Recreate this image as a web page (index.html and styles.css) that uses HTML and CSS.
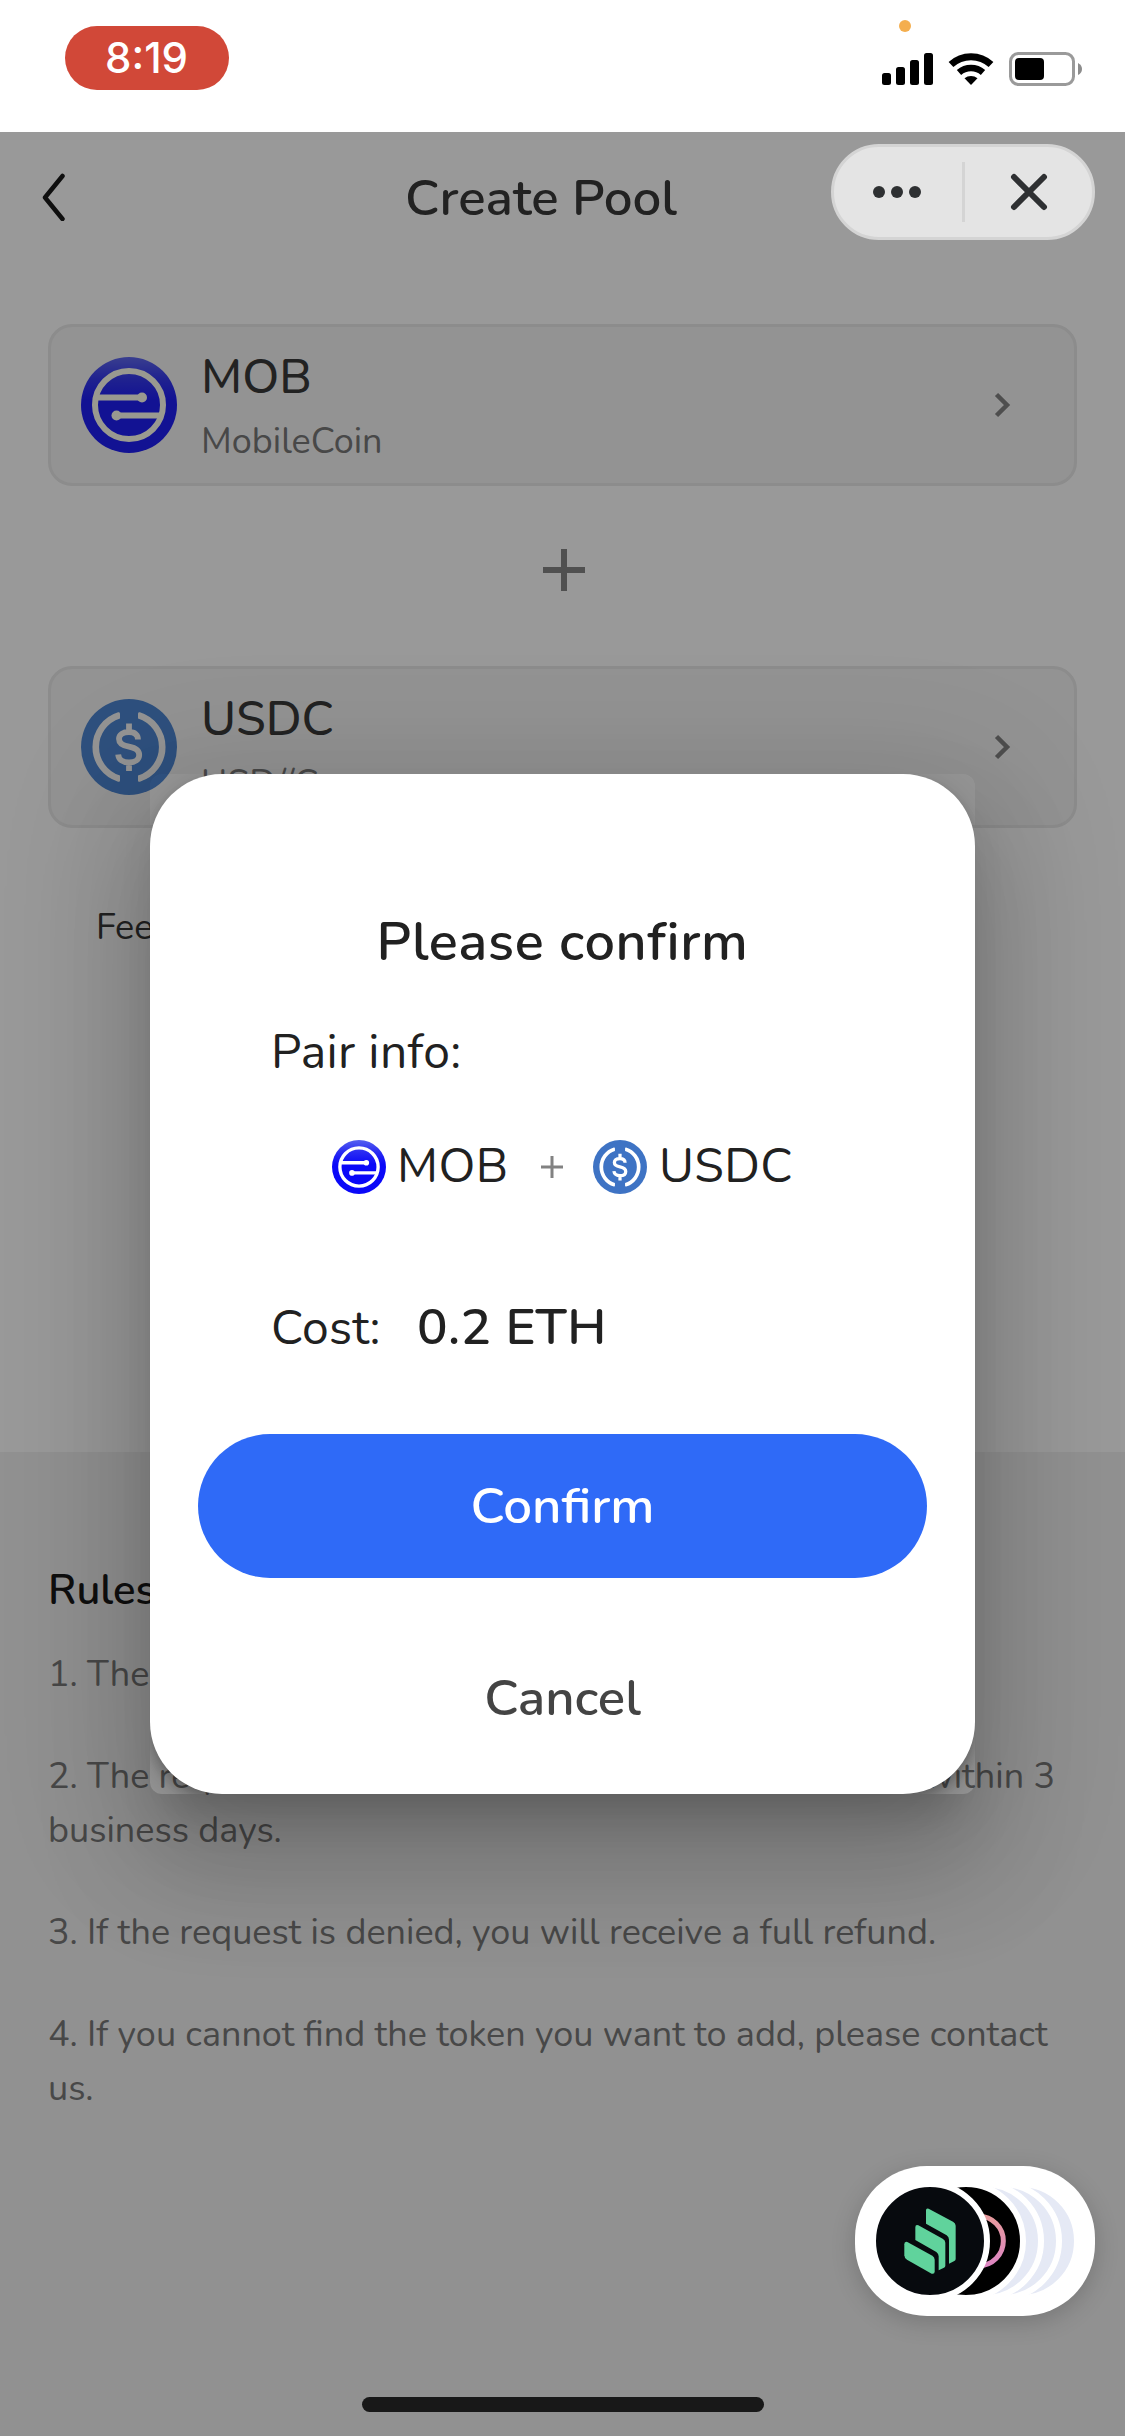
FILE: index.html
```html
<!DOCTYPE html>
<html lang="en">
<head>
<meta charset="utf-8">
<title>Create Pool</title>
<link rel="stylesheet" href="styles.css">
</head>
<body>
<svg class="defs" width="0" height="0" aria-hidden="true">
  <defs>
    <linearGradient id="mobFill" x1="0" y1="0" x2="0" y2="1">
      <stop offset="0" stop-color="#5560f0"/>
      <stop offset="0.22" stop-color="#2a2cf2"/>
      <stop offset="0.45" stop-color="#0a08f8"/>
      <stop offset="1" stop-color="#0a08f8"/>
    </linearGradient>
    <linearGradient id="mobFillCard" x1="0" y1="0" x2="0" y2="1">
      <stop offset="0" stop-color="#6068ee"/>
      <stop offset="0.22" stop-color="#363aee"/>
      <stop offset="0.45" stop-color="#1e1ef6"/>
      <stop offset="1" stop-color="#1e1ef6"/>
    </linearGradient>
    <linearGradient id="ringFill" x1="0" y1="0" x2="0" y2="1">
      <stop offset="0" stop-color="#e79a9d"/>
      <stop offset="1" stop-color="#dd86c2"/>
    </linearGradient>
    <symbol id="mob" viewBox="0 0 96 96">
      <circle cx="48" cy="48" r="34" fill="none" stroke="currentColor" stroke-width="6"/>
      <path d="M15 40.500H61M81 58.500H35" fill="none" stroke="currentColor" stroke-width="6"/>
      <circle cx="61" cy="40.500" r="5"/>
      <circle cx="35.500" cy="58.500" r="5"/>
    </symbol>
    <symbol id="usdc" viewBox="0 0 96 96">
      <path d="M39 15v4.400a30 30 0 0 0 0 57.200V81.500c0 1-.8 1.500-1.900 1.200a36.300 36.300 0 0 1 0-69.400c1.100-.3 1.900.3 1.900 1.700zM57 15v4.400a30 30 0 0 1 0 57.200V81.500c0 1 .8 1.500 1.900 1.200a36.300 36.300 0 0 0 0-69.400c-1.100-.3-1.900.3-1.900 1.700z"/>
      <path d="M57 40.500c0-4.500-3-7.500-9-7.500s-10 2.500-10 7c0 5 4 6.600 10 7.700 7 1.300 10.200 3.600 10.200 8.300S54 63.500 48 63.500 37.500 60.500 37.200 55.500M48 33v-8.500M48 72v-8.500" fill="none" stroke="currentColor" stroke-width="5.800"/>
    </symbol>
  </defs>
</svg>

<div class="screen">
  <div class="status">
    <div class="clock">8:19</div>
    <svg class="status-icons" width="210" height="80" viewBox="876 14 210 80">
      <circle cx="905" cy="26" r="6" fill="#f4ae4e"/>
      <rect x="882" y="73" width="9" height="12" rx="2.500"/>
      <rect x="896" y="67" width="9" height="18" rx="2.500"/>
      <rect x="910" y="60" width="9" height="25" rx="2.500"/>
      <rect x="924" y="53" width="9" height="32" rx="2.500"/>
      <path d="M951 64.500a29.500 29.500 0 0 1 40 0" fill="none" stroke="#000" stroke-width="7"/>
      <path d="M959 72.500a18 18 0 0 1 24 0" fill="none" stroke="#000" stroke-width="6.500"/>
      <path d="M971 85l-6.500-6.700a10.500 10.500 0 0 1 13 0z"/>
      <rect x="1010.500" y="53.500" width="63" height="31" rx="8" fill="none" stroke="#9a9a9a" stroke-width="3"/>
      <rect x="1015" y="58" width="29" height="22" rx="4"/>
      <path d="M1078 63q4 2 4 6t-4 6z" fill="#8c8c8c"/>
    </svg>
  </div>

  <div class="app">
    <header class="header">
      <svg class="back" width="24" height="48" viewBox="0 0 24 48"><path d="M20.500 3 3 24.500 20.500 46" fill="none" stroke="#1a1a1a" stroke-width="4.500" stroke-linecap="round" stroke-linejoin="round"/></svg>
      <h1 class="title">Create Pool</h1>
    </header>

    <main class="main">
      <div class="token">
        <svg class="token-icon cream" viewBox="0 0 96 96"><circle cx="48" cy="48" r="48" fill="url(#mobFillCard)"/><use href="#mob"/></svg>
        <div class="token-text">
          <div class="token-name">MOB</div>
          <div class="token-sub">MobileCoin</div>
        </div>
        <svg class="arrow" width="18" height="26" viewBox="0 0 18 26"><path d="M2.500 2.500 13 13 2.500 23.500" fill="none" stroke="#838383" stroke-width="4.500"/></svg>
      </div>
      <div class="plus-row">
        <svg width="42" height="42" viewBox="0 0 42 42"><path d="M21 0v42M0 21h42" stroke="#868686" stroke-width="6"/></svg>
      </div>
      <div class="token">
        <svg class="token-icon grey" viewBox="0 0 96 96"><circle cx="48" cy="48" r="48" fill="#4d86d2"/><use href="#usdc"/></svg>
        <div class="token-text">
          <div class="token-name">USDC</div>
          <div class="token-sub">USD//C</div>
        </div>
        <svg class="arrow" width="18" height="26" viewBox="0 0 18 26"><path d="M2.500 2.500 13 13 2.500 23.500" fill="none" stroke="#838383" stroke-width="4.500"/></svg>
      </div>
      <div class="fee">Fee</div>
    </main>

    <section class="rules">
      <h2 class="rules-title">Rules</h2>
      <p class="rule">1. The</p>
      <p class="rule"><span class="spread"><span>2. The request</span><span>within 3</span></span>business days.</p>
      <p class="rule">3. If the request is denied, you will receive a full refund.</p>
      <p class="rule">4. If you cannot find the token you want to add, please contact<br>us.</p>
    </section>
  </div>

  <div class="overlay">
    <div class="dialog">
      <div class="sheet">
        <h2 class="ask">Please confirm</h2>
        <div class="label pair-label">Pair info:</div>
        <div class="pair">
          <svg class="pair-icon" viewBox="0 0 96 96"><circle cx="48" cy="48" r="48" fill="url(#mobFill)"/><use href="#mob"/></svg>
          <span class="pair-name">MOB</span>
          <svg class="pair-plus" width="22" height="22" viewBox="0 0 22 22"><path d="M11 0v22M0 11h22" stroke="#828282" stroke-width="3"/></svg>
          <svg class="pair-icon" viewBox="0 0 96 96"><circle cx="48" cy="48" r="48" fill="#3e73c4"/><use href="#usdc"/></svg>
          <span class="pair-name pair-second">USDC</span>
        </div>
        <div class="cost"><span class="label cost-label">Cost:</span><span class="amount">0.2 ETH</span></div>
        <button class="btn confirm">Confirm</button>
        <button class="btn cancel">Cancel</button>
      </div>
    </div>
  </div>

  <div class="capsule">
    <svg width="258" height="90" viewBox="834 147 258 90">
      <g fill="#2e3032"><circle cx="879" cy="192" r="6"/><circle cx="897" cy="192" r="6"/><circle cx="915" cy="192" r="6"/></g>
      <path d="M963.500 162v60" stroke="#d4d4d4" stroke-width="3"/>
      <path d="M1014 177l30 30M1044 177l-30 30" stroke="#2e3032" stroke-width="6" stroke-linecap="round"/>
    </svg>
  </div>

  <div class="stack">
    <svg width="240" height="150" viewBox="165 138 720 450">
      <g stroke="#fff" stroke-width="18">
        <circle cx="660" cy="363" r="171" fill="#e5e9f5"/>
        <circle cx="606" cy="363" r="171" fill="#e5e9f5"/>
        <circle cx="552" cy="363" r="171" fill="#e5e9f5"/>
        <circle cx="498" cy="363" r="171" fill="#000"/>
      </g>
      <circle cx="536" cy="363" r="74" fill="none" stroke="url(#ringFill)" stroke-width="15"/>
      <circle cx="390" cy="363" r="171" fill="#070a0e" stroke="#fff" stroke-width="18"/>
      <g fill="#60d39c">
        <path d="M378 271q0-8 8-5l73 39q8 4 8 12v100q0 4-4 6l-16 8v-72q0-8-7-13l-62-35z"/>
        <path d="M346 322q0-9 9-6l73 40q8 4 8 12v69q0 4-4 6l-16 8v-42q0-8-7-13l-63-36z"/>
        <path d="M313 373q0-10 9-7l75 41q7 4 7 12v36q0 8-9 6l-74-42q-8-5-8-13z"/>
      </g>
    </svg>
  </div>
  <div class="home-bar"></div>
</div>
</body>
</html>
```
FILE: styles.css
```css
* { box-sizing: border-box; margin: 0; padding: 0; }

body {
  width: 1125px;
  height: 2436px;
  overflow: hidden;
  background: #fff;
  font-family: "Nunito", "Lato", "Noto Sans", sans-serif;
  color: #393939;
}

h1, h2 { font-weight: 600; }
svg { display: block; flex: none; }
.defs { position: absolute; }

.screen { position: relative; width: 1125px; height: 2436px; overflow: hidden; }

/* status bar */
.status {
  display: flex;
  justify-content: space-between;
  align-items: flex-start;
  height: 132px;
  padding: 14px 39px 0 65px;
}
.clock {
  width: 164px;
  height: 64px;
  margin-top: 12px;
  padding-right: 1px;
  border-radius: 32px;
  background: #d14838;
  color: #fff;
  font: 500 42px/64px "Inter", sans-serif;
  text-align: center;
}

/* page behind the dialog */
.app { height: 2304px; background: #fff; }
.header { display: flex; align-items: center; height: 126px; padding-left: 42px; }
.back { margin-top: 4px; }
.title { width: 280px; margin: 6px 0 0 339px; font-size: 51px; line-height: 60px; white-space: nowrap; }

.main { height: 1194px; padding: 66px 48px 0; }
.token {
  display: flex;
  align-items: center;
  height: 162px;
  padding: 0 62px 0 30px;
  border: 3px solid #e9e9e9;
  border-radius: 24px;
  background: #f5f5f5;
}
.token-icon { width: 96px; height: 96px; margin-right: 24px; fill: currentColor; }
.cream { color: #fffff0; }
.grey { color: #f7f7f7; }
.token-text { flex: 1; padding-top: 12px; }
.token-name { font-size: 48px; line-height: 60px; font-weight: 500; }
.token-sub { font-size: 36px; line-height: 69px; color: #787878; }
.plus-row { display: flex; justify-content: center; height: 180px; padding: 63px 0 0 3px; }
.fee { margin-top: 75px; padding-left: 48px; font-size: 36px; line-height: 50px; }

.rules { height: 984px; padding: 109px 48px 0; background: #f2f2f2; }
.rules-title { margin-bottom: 27px; font-size: 42px; line-height: 60px; color: #1a1a1a; }
.rule { margin-bottom: 48px; font-size: 36px; line-height: 54px; color: #787878; white-space: nowrap; }
.spread { display: flex; justify-content: space-between; width: 1007px; }

/* dialog */
.overlay {
  position: absolute;
  inset: 132px 0 0;
  display: flex;
  justify-content: center;
  align-items: flex-start;
  padding-top: 642px;
  background: rgba(0, 0, 0, 0.4);
}
.dialog {
  width: 825px;
  height: 1020px;
  border-radius: 12px;
  overflow: hidden;
  box-shadow: 0 33px 45px -21px rgba(0, 0, 0, 0.2), 0 72px 114px 9px rgba(0, 0, 0, 0.14), 0 27px 138px 24px rgba(0, 0, 0, 0.12);
}
.sheet {
  height: 1020px;
  padding: 132px 48px 0;
  border-radius: 72px;
  background: #fff;
  color: #212121;
  box-shadow: 0 6px 12px -3px rgba(0, 0, 0, 0.2), 0 12px 15px rgba(0, 0, 0, 0.14), 0 3px 30px rgba(0, 0, 0, 0.12);
}
.ask { font-size: 54px; line-height: 72px; letter-spacing: 0.6px; text-align: center; }
.label { font-size: 48px; line-height: 60px; letter-spacing: 0.4px; }
.pair-label { margin: 44px 0 55px 73px; }
.pair { display: flex; align-items: center; height: 60px; padding-left: 134px; }
.pair-icon { width: 54px; height: 54px; color: #fff; fill: currentColor; }
.pair-name { width: 119px; padding-bottom: 2px; margin-left: 11px; font-size: 48px; line-height: 54px; letter-spacing: 0.4px; }
.pair-second { margin-left: 12px; }
.pair-plus { margin: 0 30px 0 25px; }
.cost { display: flex; height: 60px; margin: 101px 0 76px 73px; }
.cost-label { width: 146px; }
.amount { font-size: 51px; line-height: 58px; font-weight: 600; letter-spacing: 0.45px; }
.btn {
  display: block;
  width: 729px;
  height: 144px;
  border: 0;
  border-radius: 72px;
  font: inherit;
  font-size: 51px;
  font-weight: 600;
}
.confirm { background: #2f6af7; color: #fff; }
.cancel { margin-top: 48px; background: none; color: #444; }

/* floating controls */
.capsule {
  position: absolute;
  left: 831px;
  top: 144px;
  border: 3px solid #d4d4d4;
  border-radius: 48px;
  background: #e4e4e4;
}
.stack {
  position: absolute;
  left: 855px;
  top: 2166px;
  border-radius: 72px;
  background: #fff;
  box-shadow: 0 6px 24px rgba(0, 0, 0, 0.18);
}
.home-bar {
  position: absolute;
  left: 362px;
  top: 2397px;
  width: 402px;
  height: 15px;
  border-radius: 8px;
  background: #181818;
}
```
